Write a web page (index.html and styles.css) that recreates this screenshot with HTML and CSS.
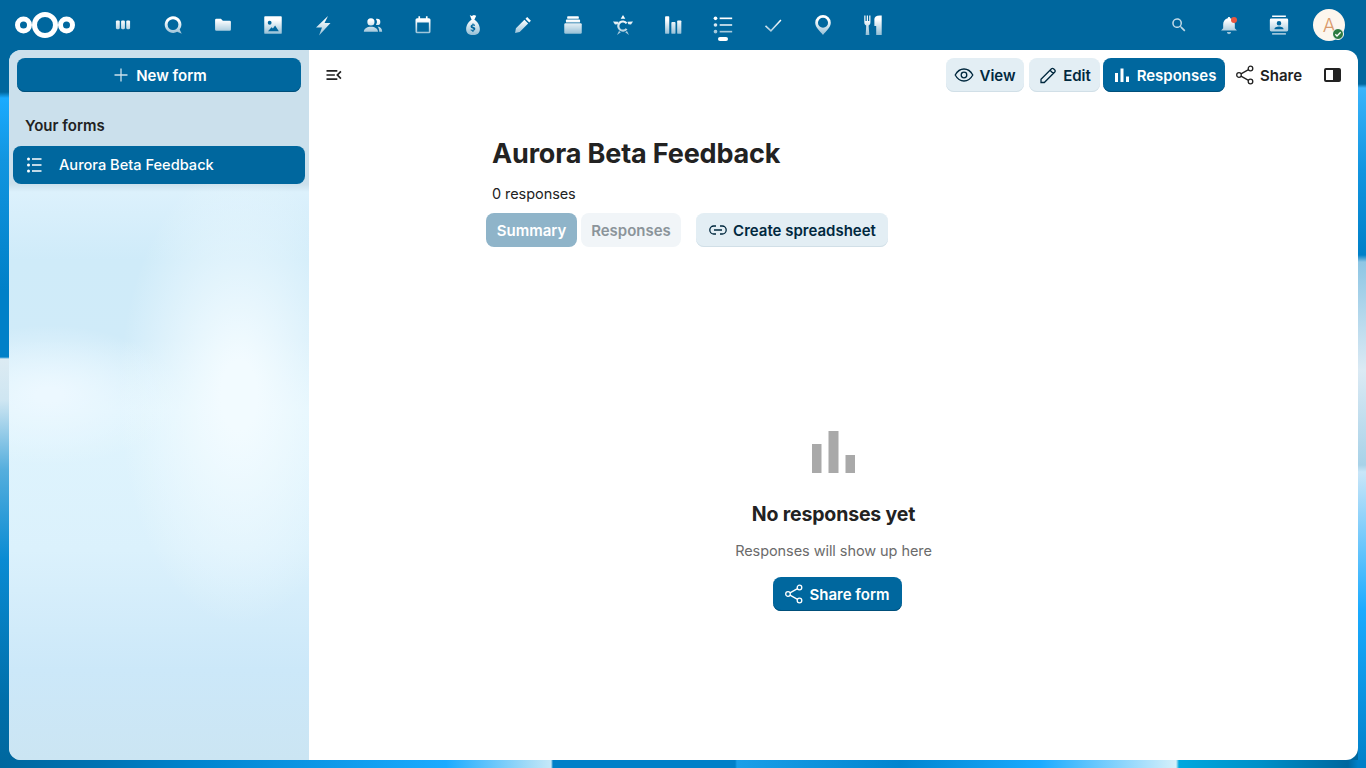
FILE: index.html
```html
<!DOCTYPE html>
<html lang="en">
<head>
    <meta charset="UTF-8">
    <meta name="viewport" content="width=device-width, initial-scale=1.0">
    <title>Forms</title>
    <link rel="stylesheet" href="styles.css">
</head>
<body>
    <header class="topbar">
        <a class="logo" href="#">
            <svg width="60" height="26" viewBox="0 0 60 26"><g fill="none" stroke="#fff" stroke-width="5"><circle cx="30" cy="13" r="10.500"/><circle cx="8.500" cy="13" r="6"/><circle cx="51.500" cy="13" r="6"/></g></svg>
        </a>
        <nav class="app-nav">
            <a class="nav-item" href="#"><svg class="nav-icon" viewBox="0 0 24 24"><rect x="3.500" y="6.500" width="4.600" height="10.500" rx="1.400"/><rect x="9.700" y="6.500" width="4.600" height="10.500" rx="1.400"/><rect x="15.900" y="6.500" width="4.600" height="10.500" rx="1.400"/></svg></a>
            <a class="nav-item" href="#"><svg class="nav-icon" viewBox="0 0 24 24"><path fill-rule="evenodd" d="M12 1.500a10 10 0 0 1 8 16l2.500 5-5.500-2.300A10 10 0 1 1 12 1.500zm0 3.500a6.500 6.500 0 1 0 0 13 6.500 6.500 0 0 0 0-13z"/></svg></a>
            <a class="nav-item" href="#"><svg class="nav-icon" viewBox="0 0 24 24"><path d="M4 4.500h5.500l2.300 2.300H20a1.500 1.500 0 0 1 1.500 1.500v9.200a1.500 1.500 0 0 1-1.500 1.500H4a1.500 1.500 0 0 1-1.500-1.500V6A1.500 1.500 0 0 1 4 4.500z"/></svg></a>
            <a class="nav-item" href="#"><svg class="nav-icon" viewBox="0 0 24 24"><path fill-rule="evenodd" d="M2.500 1.500h19a1 1 0 0 1 1 1v19a1 1 0 0 1-1 1h-19a1 1 0 0 1-1-1v-19a1 1 0 0 1 1-1zM8 7a2.300 2.300 0 1 0 0 4.600A2.300 2.300 0 0 0 8 7zm6.500 5.500l-2.600 3.800-1.600-1.500L6 19.500h13z"/></svg></a>
            <a class="nav-item" href="#"><svg class="nav-icon big" viewBox="0 0 24 24"><path d="M17 3L5 14.500h6L8 22.500 19.500 10h-6z"/></svg></a>
            <a class="nav-item" href="#"><svg class="nav-icon" viewBox="0 0 24 24"><path d="M9.500 4a4.300 4.300 0 1 1 0 8.600 4.300 4.300 0 0 1 0-8.600zM17 4.500a3.800 3.800 0 0 1 0 7.600c-.6 0-1-.1-1.500-.3a6 6 0 0 0 0-7c.5-.2.900-.3 1.500-.3zM1 20c0-3.600 3.800-6 8.500-6s8.500 2.400 8.500 6zM17.500 13.800c3.200.2 5.500 2.300 5.500 6.200h-3.500c0-2.500-.7-4.700-2-6.200z"/></svg></a>
            <a class="nav-item" href="#"><svg class="nav-icon" viewBox="0 0 24 24"><path fill-rule="evenodd" d="M6.500 1.500h2v2.300h7V1.500h2v2.300H19a2 2 0 0 1 2 2V20a2 2 0 0 1-2 2H5a2 2 0 0 1-2-2V5.800a2 2 0 0 1 2-2h1.500zM5 9v11h14V9z"/></svg></a>
            <a class="nav-item" href="#"><svg class="nav-icon tall" viewBox="0 0 24 24"><path fill-rule="evenodd" d="M8.500 1l2 1.200L13 1l2.500 1-2 4.200c3.500 2 6 6.200 6 10.300 0 4.200-3 6.500-7.500 6.500s-7.500-2.300-7.500-6.500c0-4.100 2.500-8.300 6-10.300z"/><path d="M9.500 18v-1.300c.7.400 1.500.6 2.100.6.700 0 1-.2 1-.6 0-1-3.200-.8-3.200-3.100 0-1.200.8-2 2-2.200V10.300h1.200v1.100c.6 0 1.200.2 1.600.4l-.3 1.300c-.5-.3-1.200-.5-1.800-.5s-.9.200-.9.600c0 1 3.300.8 3.300 3 0 1.200-.8 2-2 2.200v1.200h-1.200v-1.200c-.7 0-1.300-.2-1.800-.4z" fill="#00679e"/></svg></a>
            <a class="nav-item" href="#"><svg class="nav-icon" viewBox="0 0 24 24"><path d="M17 2.500l4.500 4.500-2 2-4.500-4.500zM13.700 5.800l4.500 4.500L8 20.500l-5.500 1 1-5.500z"/></svg></a>
            <a class="nav-item" href="#"><svg class="nav-icon" viewBox="0 0 24 24"><rect x="5" y="1.500" width="14" height="3" rx="1"/><rect x="3.500" y="5.500" width="17" height="3.500" rx="1"/><rect x="1.500" y="10" width="21" height="12.500" rx="1.500"/></svg></a>
            <a class="nav-item" href="#"><svg class="nav-icon big" viewBox="0 0 24 24"><path d="M12 2l2.300 3.800H9.700zM2 8.500l5.500.3-.8 2.500-2.700.2zM22 8.500l-5.500.3.800 2.500 2.700.2zM8 18l1.800 1.200L6 22zM16 18l-1.800 1.200L18 22z"/><path d="M15.600 10.400a4.600 4.600 0 1 0 0 5.400" fill="none" stroke="#fff" stroke-width="2.200"/></svg></a>
            <a class="nav-item" href="#"><svg class="nav-icon" viewBox="0 0 24 24"><rect x="2.500" y="1.500" width="5" height="21" rx="1"/><rect x="10" y="8.500" width="5" height="14" rx="1"/><rect x="17" y="6.500" width="5" height="16" rx="1"/></svg></a>
            <a class="nav-item active" href="#"><svg class="nav-icon" viewBox="0 0 24 24"><circle cx="3" cy="4" r="2.200"/><circle cx="3" cy="12" r="2.200"/><circle cx="3" cy="20" r="2.200"/><rect x="8" y="3" width="15" height="2"/><rect x="8" y="11" width="15" height="2"/><rect x="8" y="19" width="15" height="2"/></svg></a>
            <a class="nav-item" href="#"><svg class="nav-icon" viewBox="0 0 24 24"><path d="M3 13l6.500 6L21.500 6" fill="none" stroke="#fff" stroke-width="1.800"/></svg></a>
            <a class="nav-item" href="#"><svg class="nav-icon tall" viewBox="0 0 24 24"><path fill-rule="evenodd" d="M12 1a8.500 8.500 0 0 1 8.500 8.500c0 5.500-5.500 9-8.500 13.500-3-4.500-8.500-8-8.500-13.500A8.500 8.500 0 0 1 12 1zm0 3a5.500 5.500 0 1 0 0 11 5.500 5.500 0 0 0 0-11z"/></svg></a>
            <a class="nav-item" href="#"><svg class="nav-icon tall" viewBox="0 0 24 24"><path d="M2.500 1.500h1.300v6h1.400v-6h1.300v6h1.400v-6h1.300V9c0 2-.8 3-2 3.500L8 23H4l.6-10.500C3.300 12 2.500 11 2.500 9zM13.500 13V5.500c0-2.500 2-4 6-4h2V23h-6V13z"/></svg></a>
        </nav>
        <div class="header-right">
            <a class="nav-item" href="#"><svg class="nav-icon small" viewBox="0 0 24 24"><path d="M15.500 14h-.8l-.3-.3A6.500 6.500 0 1 0 13.700 14.400l.3.3v.8l5 5 1.500-1.500zm-6 0a4.500 4.500 0 1 1 0-9 4.500 4.500 0 0 1 0 9z"/></svg></a>
            <a class="nav-item bell" href="#"><svg class="nav-icon" viewBox="0 0 24 24"><path d="M12 2.500c.8 0 1.400.6 1.500 1.300 3.400.8 5.500 3.600 5.500 7.200v5l2.500 2.500H2.500L5 16v-5c0-3.600 2.100-6.400 5.500-7.200.1-.7.700-1.300 1.500-1.300zM9.500 20.500h5a2.500 2.500 0 0 1-5 0z"/></svg><span class="bell-dot"></span></a>
            <a class="nav-item" href="#"><svg class="nav-icon tall" viewBox="0 0 24 24"><path fill-rule="evenodd" d="M4.500 1.500h15v1.800h-15zM4.500 20.700h15v1.800h-15zM3.500 5h17a1.500 1.500 0 0 1 1.500 1.500v11a1.500 1.500 0 0 1-1.500 1.500h-17A1.500 1.500 0 0 1 2 17.500v-11A1.500 1.500 0 0 1 3.500 5zM12 7.500a2.500 2.500 0 1 0 0 5 2.500 2.500 0 0 0 0-5zM7 16.500h10c0-1.800-2.200-3-5-3s-5 1.200-5 3z"/></svg></a>
            <div class="avatar">
                <span>A</span>
                <span class="status"><svg width="8" height="8" viewBox="0 0 24 24"><path d="M4 13l5 5L20 7" fill="none" stroke="#fff" stroke-width="4"/></svg></span>
            </div>
        </div>
    </header>

    <div class="app">
        <aside class="sidebar">
            <button class="btn btn-primary new-form"><svg class="icon line plus" viewBox="0 0 20 20"><path d="M10 3.500v13M3.500 10h13"/></svg>New form</button>
            <div class="caption">Your forms</div>
            <a class="form-item" href="#">
                <svg class="icon line" viewBox="0 0 20 20"><path d="M7 4h9.500M7 10h9.500M7 16h9.500"/><circle class="dot" cx="3.500" cy="4" r="1.500"/><circle class="dot" cx="3.500" cy="10" r="1.500"/><circle class="dot" cx="3.500" cy="16" r="1.500"/></svg>
                <span>Aurora Beta Feedback</span>
            </a>
        </aside>

        <main class="content">
            <div class="toolbar">
                <a class="toggle" href="#"><svg class="icon" viewBox="0 0 24 24"><path d="M21,15.610L19.590,17L14.580,12L19.590,7L21,8.390L17.440,12L21,15.610M3,6H16V8H3V6M3,13V11H13V13H3M3,18V16H16V18H3Z"/></svg></a>
                <div class="toolbar-actions">
                    <button class="btn btn-light view"><svg class="icon line" viewBox="0 0 20 20"><path d="M1.200 10C3.500 5.800 6.600 4 10 4s6.500 1.800 8.800 6c-2.300 4.200-5.400 6-8.800 6s-6.500-1.800-8.800-6z"/><circle cx="10" cy="10" r="2.800"/></svg>View</button>
                    <button class="btn btn-light edit"><svg class="icon line" viewBox="0 0 20 20"><path d="M3 17.500v-3.300L13.500 3.700a1.400 1.400 0 0 1 2 0l1.300 1.300a1.400 1.400 0 0 1 0 2L6.300 17.500zM12 5.200l3.300 3.300"/></svg>Edit</button>
                    <button class="btn btn-primary responses"><svg class="icon bars" viewBox="0 0 20 20"><rect x="3" y="8" width="3" height="9"/><rect x="8.500" y="3.500" width="3" height="13.500"/><rect x="14" y="11.500" width="3" height="5.500"/></svg>Responses</button>
                    <button class="btn btn-plain share"><svg class="icon line" viewBox="0 0 20 20"><path d="M6 8.900l7.500-4.300M6 11.100l7.500 4.300"/><circle cx="4" cy="10" r="2.300"/><circle cx="15.500" cy="3.500" r="2.300"/><circle cx="15.500" cy="16.500" r="2.300"/></svg>Share</button>
                    <a class="panel-toggle" href="#"><span></span></a>
                </div>
            </div>

            <section class="summary">
                <h1>Aurora Beta Feedback</h1>
                <p class="count">0 responses</p>
                <div class="summary-actions">
                    <button class="btn tab-on">Summary</button>
                    <button class="btn tab-off">Responses</button>
                    <button class="btn btn-light spreadsheet"><svg class="icon line" viewBox="0 0 20 20"><path d="M8 6H5.800a4 4 0 0 0 0 8H8M12 6h2.200a4 4 0 0 1 0 8H12M6 10h8"/></svg>Create spreadsheet</button>
                </div>
            </section>

            <section class="empty">
                <svg class="empty-icon" viewBox="0 0 43 42"><rect x="0" y="13" width="9.500" height="29"/><rect x="16.500" y="0" width="10" height="42"/><rect x="33.500" y="24" width="9.500" height="18"/></svg>
                <h2>No responses yet</h2>
                <p>Responses will show up here</p>
                <button class="btn btn-primary share-form"><svg class="icon line" viewBox="0 0 20 20"><path d="M6 8.900l7.500-4.300M6 11.100l7.500 4.300"/><circle cx="4" cy="10" r="2.300"/><circle cx="15.500" cy="3.500" r="2.300"/><circle cx="15.500" cy="16.500" r="2.300"/></svg>Share form</button>
            </section>
        </main>
    </div>
</body>
</html>
```

FILE: styles.css
```css
* {
    box-sizing: border-box;
}

html, body {
    height: 100%;
}

body {
    margin: 0;
    overflow: hidden;
    font-family: 'Inter', 'Liberation Sans', sans-serif;
    font-size: 14.5px;
    letter-spacing: -0.07px;
    color: #222;
    background-color: #00679e;
    background-repeat: no-repeat;
    /* wallpaper only shows in the thin strips round the app */
    background-image:
        linear-gradient(90deg, #00679e 0, #0073b3 100px, #0085cf 200px, #1aabff 446px, #a5dcf7 530px, #c5e8f8 551px, #0080c8 553px, #0080c8 735px, #1a9fe8 737px, #0085cf 900px, #1aabff 1040px, #d5f0fa 1176px, #00a8de 1179px, #0090c8 1260px, #00679e 1348px, #0080c8 1358px),
        linear-gradient(180deg, #00679e 0, #00679e 92px, #1aabff 98px, #1295e0 160px, #0080c8 290px, #0080c8 357px, #dcebf3 359px, #cfe6f2 400px, #55aedd 470px, #0a8bd3 560px, #006faa 700px, #00679e 768px),
        linear-gradient(180deg, #00679e 0, #00679e 84px, #3ab4fb 88px, #1295e0 170px, #0080c8 255px, #8ec6e4 262px, #dbeaf4 370px, #a8d2e8 465px, #c9e6f8 472px, #1aabff 610px, #0080c8 768px);
    background-size: 100% 8px, 9px 100%, 8px 100%;
    background-position: left bottom, left top, right top;
}

/* top bar */
.topbar {
    display: flex;
    align-items: center;
    height: 50px;
}

.logo {
    display: flex;
    width: 98px;
    padding-left: 15px;
}

.app-nav {
    display: flex;
}

.nav-item {
    position: relative;
    display: flex;
    justify-content: center;
    align-items: center;
    width: 50px;
    height: 50px;
}

.nav-icon {
    width: 20px;
    height: 20px;
    fill: #fff;
    -webkit-mask-image: linear-gradient(#fff 25%, rgba(255,255,255,0.55));
    mask-image: linear-gradient(#fff 25%, rgba(255,255,255,0.55));
}

.nav-icon.big {
    width: 24px;
    height: 24px;
}

.nav-icon.tall {
    width: 22px;
    height: 22px;
}

.nav-icon.small {
    width: 18px;
    height: 18px;
    -webkit-mask-image: none;
    mask-image: none;
    opacity: 0.75;
}

.nav-item.active::after {
    content: "";
    position: absolute;
    left: 20px;
    bottom: 9px;
    width: 10px;
    height: 4px;
    border-radius: 2px;
    background: #fff;
}

.bell-dot {
    position: absolute;
    top: 17px;
    left: 27px;
    width: 6px;
    height: 6px;
    border-radius: 50%;
    background: #e9573f;
}

.header-right {
    display: flex;
    align-items: center;
    margin-left: auto;
    padding-right: 12px;
}

.avatar {
    position: relative;
    display: flex;
    justify-content: center;
    align-items: center;
    width: 32px;
    height: 32px;
    margin: 0 9px;
    border-radius: 50%;
    background: #fdf6ee;
    color: #d99a6c;
    font-size: 19px;
    font-weight: 300;
}

.status {
    position: absolute;
    right: 1px;
    bottom: 1px;
    display: flex;
    justify-content: center;
    align-items: center;
    width: 12px;
    height: 12px;
    border-radius: 50%;
    background: #2d7b41;
    border: 1px solid #fff;
}

/* app frame */
.app {
    display: flex;
    height: 710px;
    margin: 0 8px 0 9px;
    border-radius: 12px;
    overflow: hidden;
}

.sidebar {
    flex: 0 0 300px;
    padding: 8px 4px;
    background-color: #cfe8f6;
    background-image:
        radial-gradient(ellipse 120px 230px at 230px 345px, #f2fbff 15%, rgba(242,251,255,0) 100%),
        radial-gradient(ellipse 130px 70px at 40px 345px, #ecf8ff 10%, rgba(236,248,255,0) 100%),
        linear-gradient(180deg, #cbe0ec 0, #cbe0ec 134px, #dcf1fc 142px, #cfebf9 210px, #d0ebf9 290px, #dff4fd 360px, #dbf1fc 500px, #cce8f9 620px, #cbe5f3 710px);
}

.content {
    flex: 1;
    background: #fff;
}

/* buttons */
.btn {
    display: inline-flex;
    justify-content: center;
    align-items: center;
    height: 34px;
    padding: 0 10px;
    border: none;
    border-radius: 8px;
    font-family: inherit;
    font-size: 15px;
    font-weight: 600;
    letter-spacing: 0;
    cursor: pointer;
}

.btn-primary {
    background: #00679e;
    color: #fff;
    box-shadow: inset 0 -1px 0 #004f7a;
}

.btn-light {
    background: #e3eef4;
    color: #00283e;
    box-shadow: inset 0 -1px 0 #d1dfe7;
}

.btn-plain {
    background: transparent;
    color: #222;
}

.icon {
    flex: none;
    width: 20px;
    height: 20px;
    fill: currentColor;
}

.icon.line {
    fill: none;
    stroke: currentColor;
    stroke-width: 1.3;
}

.icon.line .dot {
    fill: currentColor;
    stroke: none;
}

.new-form {
    width: 284px;
    margin-left: 4px;
}

.new-form .plus {
    margin-right: 5px;
    opacity: 0.8;
}

.caption {
    margin: 24px 0 0 12px;
    height: 20px;
    line-height: 20px;
    font-weight: 600;
    font-size: 15px;
    letter-spacing: 0;
    color: #222;
}

.form-item {
    display: flex;
    align-items: center;
    height: 38px;
    margin-top: 10px;
    padding-left: 12px;
    border-radius: 8px;
    background: #00679e;
    color: #fff;
    font-size: 14.6px;
    font-weight: 500;
    letter-spacing: 0;
    text-decoration: none;
}

.form-item .icon {
    margin-right: 14px;
}

/* toolbar */
.toolbar {
    display: flex;
    justify-content: space-between;
    align-items: center;
    height: 50px;
    padding: 0 17px 0 15px;
}

.toggle {
    display: flex;
    color: #222;
}

.toolbar-actions {
    display: flex;
    align-items: center;
    gap: 4px;
}

.toolbar-actions .icon {
    margin-right: 5px;
}

.view { width: 78px; margin-left: 1px; }
.edit { width: 71px; margin-left: 1px; }
.responses { width: 122px; margin-right: 1px; margin-left: -1px; }
.share { width: 77px; }

.panel-toggle {
    display: block;
    width: 17px;
    height: 14px;
    margin-left: 13px;
    border: 2px solid #222;
    border-radius: 2px;
}

.panel-toggle span {
    display: block;
    width: 6px;
    height: 100%;
    margin-left: auto;
    background: #222;
}

/* summary */
.summary {
    padding: 35px 0 0 177px;
}

.summary h1 {
    margin: 0 0 0 6px;
    font-size: 27px;
    letter-spacing: -0.15px;
    line-height: 38px;
    font-weight: 700;
    color: #222;
}

.count {
    margin: 11px 0 0 6px;
    line-height: 20px;
}

.summary-actions {
    display: flex;
    margin-top: 9px;
}

.tab-on {
    width: 91px;
    background: #8fb4c9;
    color: #fff;
}

.tab-off {
    width: 100px;
    margin: 0 15px 0 4px;
    background: #f1f5f8;
    color: #8b949a;
}

.spreadsheet {
    width: 192px;
}

.spreadsheet .icon {
    margin-right: 5px;
}

/* empty state */
.empty {
    display: flex;
    flex-direction: column;
    align-items: center;
    padding: 184px 0 0 0;
}

.empty-icon {
    width: 43px;
    height: 42px;
    fill: #a9a9a9;
}

.empty h2 {
    margin: 27px 0 0;
    font-size: 19.5px;
    letter-spacing: -0.17px;
    line-height: 28px;
    font-weight: 700;
    color: #222;
}

.empty p {
    margin: 13px 0 0;
    line-height: 20px;
    color: #6b6b6b;
}

.share-form {
    width: 129px;
    margin: 16px 0 0 7px;
}

.share-form .icon {
    margin-right: 5px;
}
```
